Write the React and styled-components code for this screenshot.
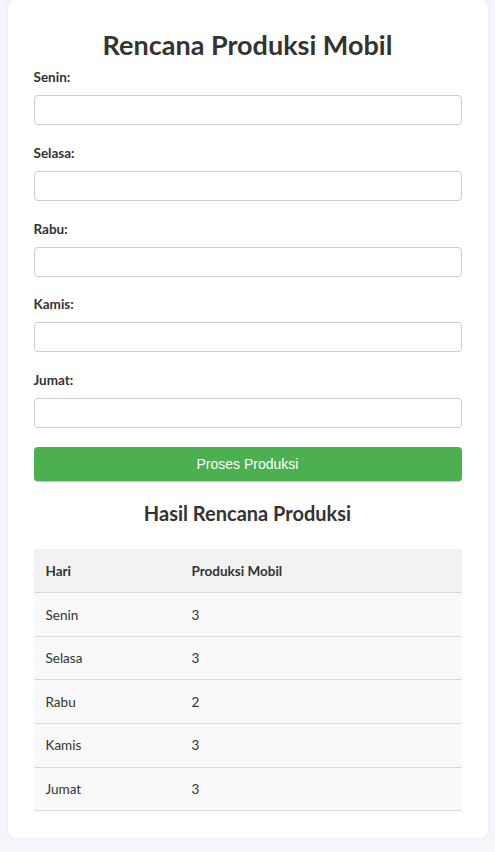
import React from "react";
import styled, { createGlobalStyle } from "styled-components";

const Global = createGlobalStyle`
  html, body { margin: 0; padding: 0; }
  body {
    background: #f4f6fb;
    font-family: "Segoe UI", Lato, "Noto Sans", sans-serif;
    color: #333;
  }
`;

const Card = styled.div`
  max-width: 480px;
  margin: 0 auto;
  box-sizing: border-box;
  background: #fff;
  border-radius: 8px;
  padding: 28px 26px 26px;
  box-shadow: 0 0 6px rgba(0, 0, 0, 0.06);
`;

const Title = styled.h1`
  margin: 0 0 7px;
  text-align: center;
  font-size: 27px;
  line-height: 34px;
  font-weight: 700;
  color: #333;
`;

const Field = styled.div`
  display: flex;
  flex-direction: column;
  margin-bottom: 19.75px;
`;

const Label = styled.label`
  font-size: 13.5px;
  font-weight: 700;
  line-height: 16px;
  margin-bottom: 10px;
  color: #333;
`;

const Input = styled.input`
  box-sizing: border-box;
  height: 30px;
  width: 100%;
  border: 1px solid #ccc;
  border-radius: 4px;
  padding: 0 8px;
  font-size: 14px;
`;

const Button = styled.button`
  display: block;
  width: 100%;
  height: 35px;
  margin-top: -1px;
  background: #4caf50;
  color: #fff;
  border: none;
  border-bottom: 1px solid #c9c9c9;
  border-radius: 4px;
  font-family: "Liberation Sans", Arial, sans-serif;
  font-size: 14px;
  cursor: pointer;
`;

const Subtitle = styled.h2`
  margin: 18px 0 23px;
  text-align: center;
  font-size: 20px;
  line-height: 26px;
  font-weight: 700;
  color: #333;
`;

const Table = styled.table`
  width: 100%;
  border-collapse: collapse;
  font-size: 13.5px;
`;

const Th = styled.th`
  text-align: left;
  padding: 0 12px;
  height: 44px;
  background: #f2f2f2;
  border-bottom: 1px solid #ddd;
  font-weight: 700;
  box-sizing: border-box;
  width: ${(p) => p.$w || "auto"};
`;

const Td = styled.td`
  padding: 0 12px;
  height: 42.6px;
  background: #f9f9f9;
  border-bottom: 1px solid #ddd;
  color: #333;
`;

const days = ["Senin", "Selasa", "Rabu", "Kamis", "Jumat"];
const result = [3, 3, 2, 3, 3];

export default function App() {
  return (
    <>
      <Global />
      <Card>
        <Title>Rencana Produksi Mobil</Title>
        {days.map((d) => (
          <Field key={d}>
            <Label>{d}:</Label>
            <Input type="number" />
          </Field>
        ))}
        <Button>Proses Produksi</Button>
        <Subtitle>Hasil Rencana Produksi</Subtitle>
        <Table>
          <thead>
            <tr>
              <Th $w="146px">Hari</Th>
              <Th>Produksi Mobil</Th>
            </tr>
          </thead>
          <tbody>
            {days.map((d, i) => (
              <tr key={d}>
                <Td>{d}</Td>
                <Td>{result[i]}</Td>
              </tr>
            ))}
          </tbody>
        </Table>
      </Card>
    </>
  );
}
